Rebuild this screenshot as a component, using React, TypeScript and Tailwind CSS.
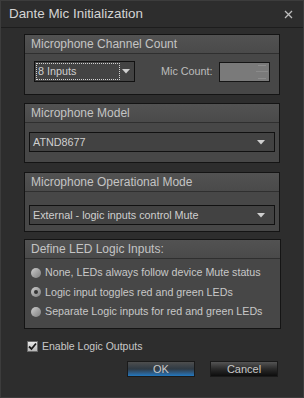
import React from "react";

const Arrow = () => (
  <svg width="8" height="5" viewBox="0 0 8 5" className="shrink-0">
    <path d="M0 0 H8 L4 4.5 Z" fill="#cfcfcf" />
  </svg>
);

const Group = ({
  title,
  children,
  className = "",
}: {
  title: string;
  children: React.ReactNode;
  className?: string;
}) => (
  <div className={`border border-[#141414] bg-[#474747] flex flex-col ${className}`}>
    <div className="h-[19px] bg-gradient-to-b from-[#525252] to-[#4a4a4a] border-b border-[#2f2f2f] flex items-center pl-[6px] text-[12px] text-[#c4c4c4] leading-none">
      {title}
    </div>
    {children}
  </div>
);

const Radio = ({ checked, label }: { checked?: boolean; label: string }) => (
  <div className="flex items-center h-[19.5px] pl-[6px]">
    <div className="w-[10px] h-[10px] rounded-full bg-gradient-to-br from-[#d0d0d0] via-[#a4a4a4] to-[#808080] flex items-center justify-center shrink-0">
      {checked && <div className="w-[4px] h-[4px] rounded-full bg-[#333]" />}
    </div>
    <span className="ml-[4px] text-[10.7px] text-[#c8c8c8] leading-none">{label}</span>
  </div>
);

export default function App() {
  return (
    <div
      className="w-[304px] h-[398px] bg-[#2d2d2d] border border-[#3c3c3c] flex flex-col"
      style={{ fontFamily: '"Liberation Sans", Arial, sans-serif' }}
    >
      {/* title bar */}
      <div className="h-[27px] flex items-center justify-between pl-[8px] pr-[10px] border-b border-[#1d1d1d] shrink-0">
        <span className="text-[13.4px] text-[#d4d4d4] leading-none">Dante Mic Initialization</span>
        <svg width="9" height="9" viewBox="0 0 9 9">
          <path d="M1 1 L8 8 M8 1 L1 8" stroke="#bdbdbd" strokeWidth="1.3" />
        </svg>
      </div>

      <div className="flex flex-col pl-[23px] pr-[23px] pt-[6px]">
        {/* Group 1 */}
        <Group title="Microphone Channel Count" className="h-[61px] w-[256px]">
          <div className="flex items-center pl-[9px] pt-[7px]">
            <div className="w-[101px] h-[21px] border border-[#111] bg-[#434343] flex items-center pr-[4px]">
              <div className="ml-[1px] h-[17px] w-[84px] border border-dotted border-[#d0d0d0] flex items-center pl-[1px] text-[10.8px] text-[#cfcfcf] leading-none">
                8 Inputs
              </div>
              <div className="flex-1" />
              <Arrow />
            </div>
            <span className="ml-[26px] text-[10.8px] text-[#bdbdbd] leading-none">Mic Count:</span>
            <div className="ml-[6px] w-[51px] h-[20px] border border-[#151515] bg-[#7a7a7a] flex justify-end">
              <div className="w-[13px] h-full flex flex-col items-center justify-between py-[2px]">
                <div className="w-[8px] h-[1px] bg-[#8d8d8d]" />
                <div className="w-[12px] h-[1px] bg-[#8a8a8a]" />
                <div className="w-[8px] h-[1px] bg-[#8d8d8d]" />
              </div>
            </div>
          </div>
        </Group>

        {/* Group 2 */}
        <Group title="Microphone Model" className="mt-[8px] h-[60px] w-[256px]">
          <div className="px-[4px] pt-[9px]">
            <div className="h-[20px] border border-[#111] bg-[#424242] flex items-center pl-[3px] pr-[9px]">
              <span className="text-[10.8px] text-[#cfcfcf] leading-none flex-1">ATND8677</span>
              <Arrow />
            </div>
          </div>
        </Group>

        {/* Group 3 */}
        <Group title="Microphone Operational Mode" className="mt-[9px] h-[60px] w-[256px]">
          <div className="px-[4px] pt-[13px]">
            <div className="h-[20px] border border-[#111] bg-[#424242] flex items-center pl-[3px] pr-[9px]">
              <span className="text-[10.8px] text-[#cfcfcf] leading-none flex-1">
                External - logic inputs control Mute
              </span>
              <Arrow />
            </div>
          </div>
        </Group>

        {/* Group 4 */}
        <Group title="Define LED Logic Inputs:" className="mt-[7px] h-[90px] w-[257px]">
          <div className="flex flex-col pt-[4px]">
            <Radio label="None, LEDs always follow device Mute status" />
            <Radio checked label="Logic input toggles red and green LEDs" />
            <Radio label="Separate Logic inputs for red and green LEDs" />
          </div>
        </Group>

        {/* checkbox */}
        <div className="flex items-center mt-[12px] pl-[3px]">
          <div className="w-[11px] h-[11px] bg-gradient-to-b from-[#e8e8e8] to-[#b8b8b8] border border-[#6a6a6a] flex items-center justify-center">
            <svg width="9" height="9" viewBox="0 0 9 9">
              <path d="M1 4.5 L3.5 7 L8 1.5" stroke="#1a1a1a" strokeWidth="1.8" fill="none" />
            </svg>
          </div>
          <span className="ml-[4px] text-[10.5px] text-[#c8c8c8] leading-none">Enable Logic Outputs</span>
        </div>

        {/* buttons */}
        <div className="flex justify-end mt-[9px] pr-[2px] gap-[15px]">
          <div className="w-[68px] h-[16px] border border-[#1a1a1a] bg-gradient-to-b from-[#4e4e4e] via-[#2f3a44] to-[#1f78c0] flex items-center justify-center text-[11px] text-[#c8c8c8] leading-none">
            OK
          </div>
          <div className="w-[68px] h-[16px] border border-[#1a1a1a] bg-gradient-to-b from-[#555555] via-[#2a2a2a] to-[#0d0d0d] flex items-center justify-center text-[11px] text-[#c8c8c8] leading-none">
            Cancel
          </div>
        </div>
      </div>
    </div>
  );
}
